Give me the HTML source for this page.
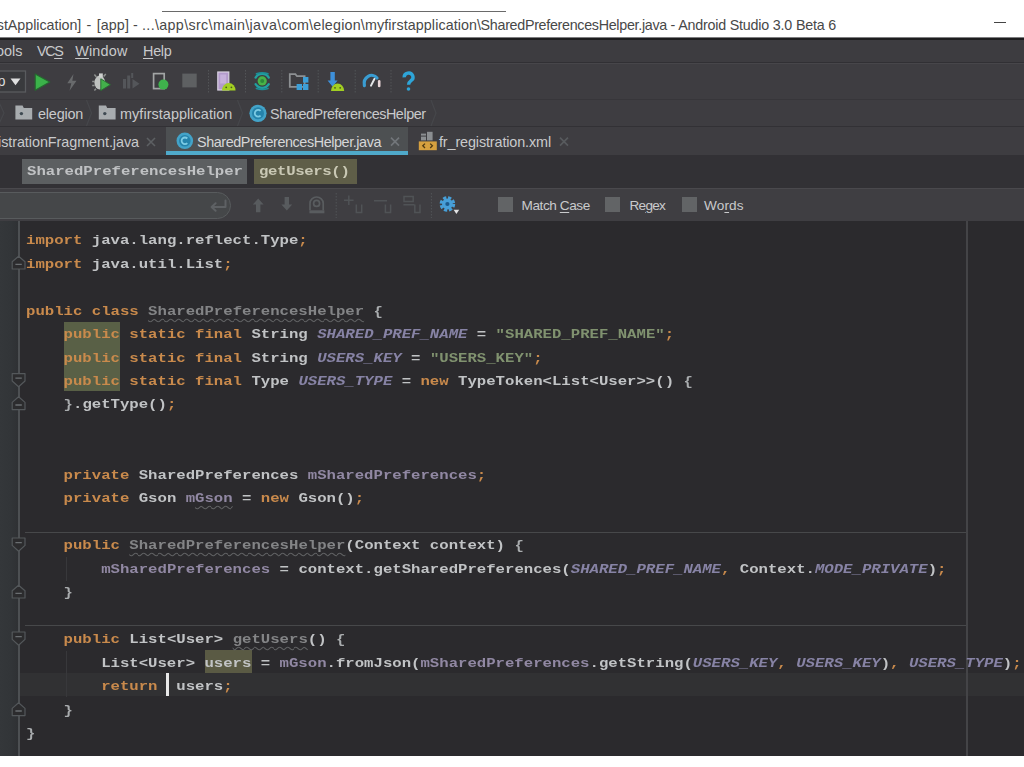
<!DOCTYPE html>
<html lang="en">
<head>
<meta charset="utf-8">
<title>SharedPreferencesHelper.java - Android Studio 3.0 Beta 6</title>
<style>
html,body{margin:0;padding:0;}
body{width:1024px;height:767px;overflow:hidden;background:#fff;position:relative;font-family:"Liberation Sans","DejaVu Sans",sans-serif;}
.abs{position:absolute;}
svg{position:absolute;overflow:visible;}
.ui{position:absolute;white-space:nowrap;font-size:14.4px;line-height:18px;color:#c9cacc;}
u{text-decoration:underline;text-underline-offset:1.5px;text-decoration-thickness:1px;}
/* title bar */
#title{left:0;top:0;width:1024px;height:37px;background:#fff;}
#title .ui{color:#484848;top:15.6px;font-size:14.3px;white-space:pre;}
#topline{left:162px;top:11px;width:344px;height:1px;background:#6a6a6a;}
#minim{left:994px;top:22px;width:12px;height:1px;background:#444;}
/* bars */
#menu{left:0;top:37px;width:1024px;height:26px;background:#3d3c40;border-top:3px solid #1c1c1e;box-sizing:border-box;}
#tedge{left:0;top:37px;width:1024px;height:1px;background:#7d7d7f;}
#toolbar{left:0;top:62px;width:1024px;height:38px;background:#3e3d41;border-top:1.5px solid #313034;box-sizing:border-box;box-shadow:inset 0 1px 0 #47464a;}
#crumbs{left:0;top:98.5px;width:1024px;height:27.5px;background:#3e3d41;border-top:1px solid #37363a;box-sizing:border-box;}
#tabs{left:0;top:126px;width:1024px;height:29px;background:#3e3d41;border-top:1px solid #323135;box-sizing:border-box;}
#acttab{left:166px;top:127px;width:242px;height:24px;background:#4d5052;border-bottom:4px solid #4fa9ca;}
#struct{left:0;top:155px;width:1024px;height:33px;background:#323135;}
.pill{position:absolute;top:158.600px;height:25.600px;box-sizing:border-box;}
#search{left:0;top:188px;width:1024px;height:33px;background:#3f3e42;border-top:1px solid #4a494d;box-sizing:border-box;}
#field{left:-20px;top:191.5px;width:251px;height:27.500px;box-sizing:border-box;border:1.5px solid #585b5d;border-radius:13.500px;background:#454749;}
.cb{position:absolute;top:197.3px;width:15px;height:14.7px;background:#626466;}
/* editor */
#editor{left:0;top:220.500px;width:1024px;height:535px;background:#2b2a2d;}
#gutter{left:0;top:220.500px;width:18px;height:535px;background:linear-gradient(90deg,#34373a 0,#323538 60%,#2f3134 100%);}
#gline{left:18px;top:221px;width:1.500px;height:535px;background:#4d5053;}
#margin{left:966px;top:221px;width:1.5px;height:535px;background:#444447;}
.sep{position:absolute;left:25px;width:941px;height:1px;background:#47484a;}
#curline{left:20px;top:673px;width:1004px;height:22.5px;background:#313133;}
.hl{position:absolute;background:#5a5a44;}
#caret{left:166px;top:673px;width:2.5px;height:23px;background:#e8e8e8;}
pre{margin:0;}
#code{position:absolute;left:26px;top:229.2px;font-family:"Liberation Mono","DejaVu Sans Mono",monospace;font-weight:bold;font-size:13.4px;line-height:23.47px;color:#c1c3c5;white-space:pre;transform:scaleX(1.1687);transform-origin:0 0;filter:blur(0.5px);}
.mono{font-family:"Liberation Mono","DejaVu Sans Mono",monospace;font-weight:bold;font-size:13.4px;white-space:pre;transform:scaleX(1.1687);transform-origin:0 0;}
.k{color:#c98a4c}.s{color:#80926f}.f{color:#9188a3}.c{color:#8783a5;font-style:italic}
.g{color:#838486;text-decoration:underline wavy #606163;text-decoration-thickness:1px;text-underline-offset:3px}
.w{text-decoration:underline wavy #606163;text-decoration-thickness:1px;text-underline-offset:3px}
.b{color:#a9acae}
#bottom{left:0;top:756px;width:1024px;height:11px;background:#fff;}
</style>
</head>
<body>
<!-- TITLE BAR -->
<div id="title" class="abs">
<span class="ui tt" id="t0" style="left:-3.2px;letter-spacing:-0.039px">stApplication]</span><span class="ui tt" id="t1" style="left:86.5px">- </span><span class="ui tt" id="t1b" style="left:96.7px;letter-spacing:0.099px">[app] - </span><span class="ui tt" id="t2" style="left:142px;letter-spacing:0.345px">...\app\src\main\java\</span><span class="ui tt" id="t3" style="left:281.5px;letter-spacing:0.203px">com\elegion\</span><span class="ui tt" id="t4" style="left:365px;letter-spacing:0.093px">myfirstapplication\</span><span class="ui tt" id="t5" style="left:480.6px;letter-spacing:-0.300px">SharedPreferencesHelper.java </span><span class="ui tt" id="t6" style="left:670.6px;letter-spacing:-0.203px">- Android Studio 3.0 Beta 6</span>
</div>
<div id="topline" class="abs"></div>
<div id="minim" class="abs"></div>

<!-- MENU BAR -->
<div id="menu" class="abs"></div><div id="tedge" class="abs"></div>
<span class="ui" id="m1" style="left:-4px;top:42px;letter-spacing:0.000px">ools</span>
<span class="ui" id="m2" style="left:37px;top:42px;letter-spacing:-1.433px">VC<u>S</u></span>
<span class="ui" id="m3" style="left:75.2px;top:42px;letter-spacing:0.183px"><u>W</u>indow</span>
<span class="ui" id="m4" style="left:143px;top:42px;letter-spacing:-0.280px"><u>H</u>elp</span>

<!-- TOOLBAR -->
<div id="toolbar" class="abs"></div>


<!-- NAV CRUMBS -->
<div id="crumbs" class="abs"></div>
<span class="ui" id="c1" style="left:38px;top:105px;letter-spacing:-0.189px">elegion</span>
<span class="ui" id="c2" style="left:120px;top:105px;letter-spacing:0.068px">myfirstapplication</span>
<span class="ui" id="c3" style="left:270px;top:105px;letter-spacing:-0.473px">SharedPreferencesHelper</span>

<!-- TABS -->
<div id="tabs" class="abs"></div>
<div id="acttab" class="abs"></div>
<span class="ui" id="tb1" style="left:-2px;top:133.3px;letter-spacing:-0.063px">istrationFragment.java</span>
<span class="ui" id="tb2" style="left:197px;top:133.3px;color:#d6d7d8;letter-spacing:-0.428px">SharedPreferencesHelper.java</span>
<span class="ui" id="tb3" style="left:439px;top:133.3px;letter-spacing:-0.125px">fr_registration.xml</span>

<!-- STRUCTURE CRUMBS -->
<div id="struct" class="abs"></div>
<div class="pill" style="left:22px;width:225px;background:#5c5f61"></div>
<div class="pill" style="left:254px;width:103px;background:#5f5e48"></div>
<span class="abs mono" id="p1" style="left:27px;top:163px;line-height:18px;color:#c0c2c4">SharedPreferencesHelper</span>
<span class="abs mono" id="p2" style="left:259px;top:163px;line-height:18px;color:#c9c8b4;letter-spacing:-0.297px">getUsers()</span>

<!-- SEARCH BAR -->
<div id="search" class="abs"></div>
<div id="field" class="abs"></div>
<div class="cb" style="left:498px"></div>
<div class="cb" style="left:605px"></div>
<div class="cb" style="left:682px"></div>
<span class="ui" id="s1" style="left:521.5px;top:196.7px;font-size:13.6px;letter-spacing:-0.416px">Match <u>C</u>ase</span>
<span class="ui" id="s2" style="left:629.5px;top:196.7px;font-size:13.6px;letter-spacing:-0.745px">Re<u>g</u>ex</span>
<span class="ui" id="s3" style="left:704px;top:196.7px;font-size:13.6px;letter-spacing:0.129px">Wo<u>r</u>ds</span>

<!-- EDITOR -->
<div id="editor" class="abs"></div>
<div id="curline" class="abs"></div>
<div id="gutter" class="abs"></div>
<div id="gline" class="abs"></div>
<div id="margin" class="abs"></div>
<div class="sep" style="top:532px"></div>
<div class="sep" style="top:625px"></div>
<div class="abs" style="left:66px;top:557px;width:1px;height:24px;background:#38383b"></div>
<div class="abs" style="left:66px;top:651px;width:1px;height:46px;background:#38383b"></div>
<div class="hl" style="left:63.800px;top:321.500px;width:56.600px;height:69.400px;background:#596046"></div>
<div class="hl" style="left:204.5px;top:650px;width:47.5px;height:23px"></div>
<pre id="code"><span class="k">import</span> java.lang.reflect.Type<span class="k">;</span>
<span class="k">import</span> java.util.List<span class="k">;</span>

<span class="k">public class</span> <span class="g">SharedPreferencesHelper</span> <span class="b">{</span>
    <span class="k">public static final</span> String <span class="c">SHARED_PREF_NAME</span> = <span class="s">"SHARED_PREF_NAME"</span><span class="k">;</span>
    <span class="k">public static final</span> String <span class="c">USERS_KEY</span> = <span class="s">"USERS_KEY"</span><span class="k">;</span>
    <span class="k">public static final</span> Type <span class="c">USERS_TYPE</span> = <span class="k">new</span> TypeToken&lt;List&lt;User&gt;&gt;() <span class="b">{</span>
    <span class="b">}</span>.getType()<span class="k">;</span>


    <span class="k">private</span> SharedPreferences <span class="f">mSharedPreferences</span><span class="k">;</span>
    <span class="k">private</span> Gson <span class="f">m<span class="w">Gson</span></span> = <span class="k">new</span> Gson()<span class="k">;</span>

    <span class="k">public</span> <span class="g">SharedPreferencesHelper</span>(Context context) <span class="b">{</span>
        <span class="f">mSharedPreferences</span> = context.getSharedPreferences(<span class="c">SHARED_PREF_NAME</span><span class="k">,</span> Context.<span class="c">MODE_PRIVATE</span>)<span class="k">;</span>
    <span class="b">}</span>

    <span class="k">public</span> List&lt;User&gt; <span class="g">getUsers</span>() <span class="b">{</span>
        List&lt;User&gt; users = <span class="f">mGson</span>.fromJson(<span class="f">mSharedPreferences</span>.getString(<span class="c">USERS_KEY</span><span class="k">,</span> <span class="c">USERS_KEY</span>)<span class="k">,</span> <span class="c">USERS_TYPE</span>)<span class="k">;</span>
        <span class="k">return</span>  users<span class="k">;</span>
    <span class="b">}</span>
<span class="b">}</span></pre>
<div id="caret" class="abs"></div>
<svg id="icons" width="1024" height="767" viewBox="0 0 1024 767" style="left:0;top:0;pointer-events:none">
<!-- run config combo -->
<rect x="-6" y="71" width="31.5" height="21" fill="#393a3d" stroke="#595b5e" stroke-width="1.3"/>
<path d="M10.5 78.6h10l-5 6.6z" fill="#dfe0e0"/>
<text x="-2.6" y="86" font-family="Liberation Sans, sans-serif" font-size="14.4" fill="#dcdddd">p</text>
<!-- run -->
<path d="M35.2 74v16.2l14.6-8.1z" fill="#3bb24a" stroke="#25692f" stroke-width="1.2" stroke-linejoin="round"/>
<!-- lightning -->
<path d="M73.5 74l-6.2 9.3h4l-1.8 7.4 7-10h-4.2z" fill="#686a6c"/>
<!-- debug bug -->
<g>
<path d="M96.400 77l-2-2.400M103.600 76.600l2.200-2.600M94.600 81.400h-2.400M94.600 85.400h-2.400M96 88.800l-1.600 1.800" stroke="#8e918f" stroke-width="1.500" fill="none"/>
<ellipse cx="99.800" cy="82.600" rx="5.400" ry="7" fill="#bfc2c0"/>
<path d="M99 73.400h3.800v4h-3.800z" fill="#cdd0ce"/>
<path d="M100.800 78.800v11.800l9.600-5.900z" fill="#43b04b" stroke="#2b6d33" stroke-width="1"/>
</g>
<!-- profile (disabled) -->
<g fill="#54565a">
<rect x="123" y="79" width="3" height="9.5"/><rect x="127.2" y="75.5" width="3" height="13"/><rect x="131.2" y="73" width="2" height="5"/>
<path d="M132.5 79v9.5l7-4.7z"/>
</g>
<!-- device + green -->
<rect x="153.6" y="73.6" width="10.6" height="15" fill="none" stroke="#a2a5a5" stroke-width="1.7"/>
<circle cx="163.4" cy="84.6" r="5" fill="#3fb24c"/>
<!-- stop -->
<rect x="182.3" y="73.6" width="14.4" height="13.8" fill="#5e6062"/>
<!-- separators -->
<g stroke="#525457" stroke-width="1" stroke-dasharray="1.5 1.5">
<path d="M208.5 70v24M245.5 70v24M281.8 70v24M318.2 70v24M355.2 70v24M391 70v24"/>
</g>
<!-- AVD manager -->
<rect x="217.8" y="72" width="11" height="18" fill="#b39bcc" stroke="#d9d2e2" stroke-width="1.2"/>
<rect x="220.2" y="74.5" width="6" height="9" fill="#c6b1dc"/>
<path d="M222 90.6a6.8 7.6 0 0 1 13.6 0z" fill="#a2cf22"/>
<circle cx="226.2" cy="87.3" r="0.9" fill="#4b5a1c"/><circle cx="231.4" cy="87.3" r="0.9" fill="#4b5a1c"/>
<!-- sync -->
<g fill="none" stroke="#21a0a0" stroke-width="2.3" stroke-linecap="round">
<path d="M255.6 77.6a7.8 7.8 0 0 1 13.2 0"/><path d="M255.6 84.2a7.8 7.8 0 0 0 13.2 0"/>
<path d="M256.4 73.8a9 4 0 0 1 11.6 0" stroke-width="1.6" stroke="#1d8f97"/><path d="M256.4 88.4a9 4 0 0 0 11.6 0" stroke-width="1.6" stroke="#1d8f97"/>
</g>
<circle cx="262.2" cy="80.9" r="4.6" fill="#49b348"/>
<circle cx="262.2" cy="80.9" r="2" fill="#2c8a3a"/>
<!-- project structure -->
<path d="M289.8 74.2h5.6l1.6 2h7.6v10.6h-14.8z" fill="none" stroke="#8d9093" stroke-width="1.8"/>
<g fill="#3c9fd8"><rect x="303" y="77" width="5.4" height="5.6"/><rect x="296.6" y="84" width="5.4" height="6"/><rect x="303" y="84" width="5.4" height="6"/></g>
<!-- SDK manager -->
<path d="M330.4 72h4.4v8.6h2.8l-5 6.2-5-6.2h2.8z" fill="#3e90da"/>
<path d="M331 91a6.6 7.4 0 0 1 13.2 0z" fill="#a2cf22"/>
<circle cx="335" cy="87.8" r="0.9" fill="#4b5a1c"/><circle cx="340.2" cy="87.8" r="0.9" fill="#4b5a1c"/>
<!-- gauge -->
<path d="M364.4 85.6a7.4 8.4 0 0 1 12.6-7.6" fill="none" stroke="#3a9dd2" stroke-width="3.2" stroke-linecap="round"/>
<path d="M371 85.6l3.4-6.6" stroke="#e4e6e8" stroke-width="2" stroke-linecap="round"/>
<path d="M379.2 86v-4.6" stroke="#e8d6d8" stroke-width="2.6" stroke-linecap="round"/>
<!-- help -->
<path d="M404.2 77.4a4.4 4.2 0 1 1 6.6 3.4c-1.8 1.2-2.2 2-2.2 4" fill="none" stroke="#2ea5d8" stroke-width="3.400"/>
<circle cx="408.5" cy="89" r="1.8" fill="#2ea5d8"/>

<!-- nav crumb chevrons -->
<g fill="none" stroke="#46474b" stroke-width="1.2">
<path d="M-2 100l6 13-6 13M86.5 100l5 13-5 13M237.5 100l5 13-5 13M431 100l5 13-5 13"/>
</g>
<!-- folders -->
<g fill="#a8acaf">
<path d="M15.4 105.6h7.2l1.2 2.4h8.4v11.4H15.4z"/>
<path d="M98.8 105.6h7.2l1.2 2.4h8.4v11.4H98.8z"/>
</g>
<circle cx="21.4" cy="113.6" r="1.7" fill="#3f4a52"/><circle cx="104.8" cy="113.6" r="1.7" fill="#3f4a52"/>
<!-- class icons -->
<g>
<circle cx="258" cy="113.3" r="8.6" fill="#43a3c8"/><circle cx="258" cy="113.3" r="6" fill="#2583ab"/>
<path d="M260.6 110.9a3.4 3.4 0 1 0 0 4.8" fill="none" stroke="#7ccbe4" stroke-width="1.8"/>
<circle cx="184.8" cy="140.8" r="8.3" fill="#43a3c8"/><circle cx="184.8" cy="140.8" r="5.8" fill="#2583ab"/>
<path d="M187.3 138.5a3.3 3.3 0 1 0 0 4.6" fill="none" stroke="#7ccbe4" stroke-width="1.8"/>
</g>
<!-- tab close crosses -->
<g stroke-width="1.6" fill="none">
<path d="M147 138l8 8M155 138l-8 8" stroke="#5d6063"/>
<path d="M391 137.6l8 8M399 137.6l-8 8" stroke="#72767a"/>
<path d="M560 137.600l8 8M568 137.600l-8 8" stroke="#585b5e"/>
</g>
<!-- xml icon -->
<rect x="418.8" y="141.4" width="18" height="8.8" fill="#d6a03f"/>
<path d="M425 143.6l-2.2 2.2 2.2 2.2M430.2 143.6l2.2 2.2-2.2 2.2" fill="none" stroke="#4e3a14" stroke-width="1.3"/>
<g fill="#8b8e91"><rect x="421" y="136.6" width="5" height="3.8"/><rect x="427" y="131.8" width="5.6" height="8.6"/><rect x="421" y="133.6" width="5" height="2"/></g>

<!-- search bar icons -->
<path d="M225.5 200.5v6.5h-13.5M215.6 203.2l-4 3.800 4 3.800" fill="none" stroke="#5e6164" stroke-width="2" stroke-linecap="round" stroke-linejoin="round"/>
<g fill="#585b5e">
<path d="M258.200 198.600l5.400 6h-3.200v7.600h-4.400v-7.600h-3.200z"/>
<path d="M286.800 210.400l5.400-6h-3.200v-7.400h-4.400v7.400h-3.200z"/>
</g>
<g fill="none" stroke="#595c5f" stroke-width="1.700">
<path d="M310 210.200v-7a6.600 6.200 0 0 1 13.200 0v7"/><circle cx="316.600" cy="203.400" r="3"/>
<path d="M309.400 211.800h15" stroke-width="3"/>
</g>
<g fill="none" stroke="#505356" stroke-width="1.500">
<path d="M344 200.300h9.600M348.800 195.600v9.400M356.300 204.600v7.800h5.400v-7.800"/>
<path d="M374 200.700h13M385.400 204.600v7.800h5.200v-7.800"/>
<path d="M404 196.600h9.200v4.800h-9.200zM403.400 204.800h11M414.800 204.600v7.800h5.200v-7.800"/>
</g>
<g stroke="#525457" stroke-width="1" stroke-dasharray="1.500 1.500"><path d="M336.200 193v25M431.400 193v25"/></g>
<!-- gear -->
<g>
<circle cx="447.400" cy="204" r="6" fill="none" stroke="#479fd8" stroke-width="3.600" stroke-dasharray="3 1.700"/>
<circle cx="447.400" cy="204" r="5.400" fill="#479fd8"/><circle cx="447.400" cy="204" r="2.100" fill="#1d5a8c"/>
<path d="M453.600 209.800h5.600l-2.800 4.200z" fill="#e2e3e4"/>
</g>

<!-- fold markers -->
<g fill="#2c2c2e" stroke="#54585b" stroke-width="1.2" stroke-linejoin="round">
<path d="M12.2 269v-7.2l6.4-5.6 6.4 5.6v7.2z"/>
<path d="M12.2 373.6h12.8v7.4l-6.4 5.8-6.4-5.800z"/>
<path d="M12.2 409.600v-7.2l6.4-5.6 6.4 5.6v7.2z"/>
<path d="M12.2 538h12.8v7.4l-6.4 5.800-6.4-5.800z"/>
<path d="M12.2 598v-7.2l6.4-5.600 6.4 5.600v7.200z"/>
<path d="M12.2 632h12.8v7.400l-6.4 5.800-6.4-5.800z"/>
<path d="M12.2 715.600v-7.200l6.400-5.600 6.400 5.600v7.200z"/>
</g>
<g stroke="#6a6e71" stroke-width="1.3">
<path d="M15.4 264.4h6.400M15.400 378.200h6.400M15.400 405h6.400M15.400 542.600h6.400M15.400 593.400h6.400M15.400 636.600h6.400M15.400 711h6.400"/>
</g>
</svg>
<div id="bottom" class="abs"></div>
</body>
</html>
